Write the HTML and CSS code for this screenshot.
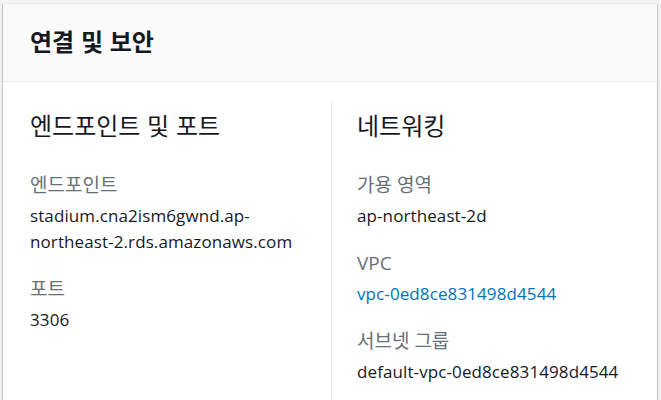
FILE: index.html
```html
<!DOCTYPE html>
<html lang="ko">
<head>
<meta charset="utf-8">
<link rel="stylesheet" href="styles.css">
</head>
<body>
<div class="card">
  <div class="card-header">
    <h2 class="card-title">연결 및 보안</h2>
  </div>
  <div class="card-body">
    <div class="col">
      <h3 class="col-title">엔드포인트 및 포트</h3>
      <div class="item">
        <div class="label">엔드포인트</div>
        <div class="value">stadium.cna2ism6gwnd.ap-<br>northeast-2.rds.amazonaws.com</div>
      </div>
      <div class="item">
        <div class="label">포트</div>
        <div class="value">3306</div>
      </div>
    </div>
    <div class="col col-right">
      <h3 class="col-title">네트워킹</h3>
      <div class="item">
        <div class="label">가용 영역</div>
        <div class="value">ap-northeast-2d</div>
      </div>
      <div class="item">
        <div class="label">VPC</div>
        <div class="value"><a class="link" href="#">vpc-0ed8ce831498d4544</a></div>
      </div>
      <div class="item">
        <div class="label">서브넷 그룹</div>
        <div class="value">default-vpc-0ed8ce831498d4544</div>
      </div>
    </div>
  </div>
</div>
</body>
</html>
```

FILE: styles.css
```css
html, body {
  margin: 0;
  padding: 0;
  background: #f2f3f3;
}
body {
  padding: 3px 3px 0 3px;
  height: 400px;
  box-sizing: border-box;
  overflow: hidden;
  font-family: "Open Sans", "Noto Sans CJK KR", sans-serif;
  color: #16191f;
}
.card {
  width: 654px;
  height: 397px;
  box-sizing: border-box;
  background: #fff;
  box-shadow: 0 1px 1px 0 rgba(0,28,36,.3), 1px 1px 1px 0 rgba(0,28,36,.15), -1px 1px 1px 0 rgba(0,28,36,.15);
  border-top: 1px solid #eaeded;
}
.card-header {
  background: #fafafa;
  border-bottom: 1px solid #eaeded;
  height: 77px;
  display: flex;
  align-items: center;
  padding: 0 27px;
}
.card-title {
  margin: 0;
  font-family: "Noto Sans CJK KR", sans-serif;
  font-size: 24px;
  font-weight: 700;
  line-height: 30px;
  position: relative;
  top: -2px;
}
.card-body {
  display: grid;
  grid-template-columns: 328px 1fr;
  padding: 20px 0 0 0;
}
.col {
  padding: 0 0 0 27px;
}
.col-right {
  border-left: 1px solid #eaeded;
  padding-left: 25px;
}
.col-title {
  margin: 0 0 32px 0;
  font-family: "Noto Sans CJK KR", sans-serif;
  font-size: 24px;
  font-weight: 400;
  line-height: 30px;
  padding-top: 8px;
}
.item {
  margin-bottom: 21px;
}
.label {
  color: #687078;
  font-size: 19px;
  line-height: 26px;
  margin-bottom: 5px;
}
.value {
  font-size: 17px;
  line-height: 26px;
  letter-spacing: 0.1px;
}
.link {
  color: #0073bb;
  text-decoration: none;
}
```
